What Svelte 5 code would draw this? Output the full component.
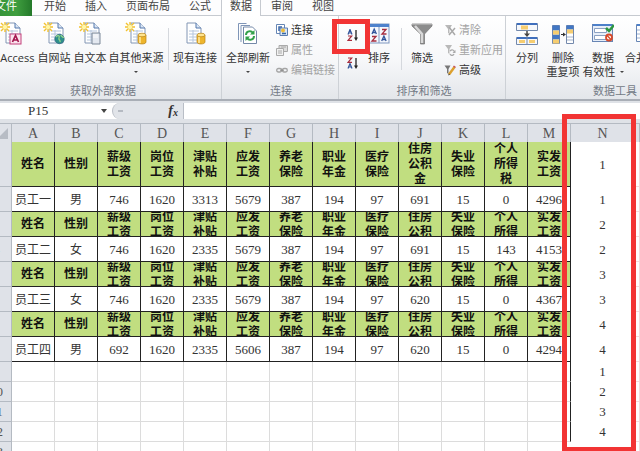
<script>
  const tabs = ['开始', '插入', '页面布局', '公式', '数据', '审阅', '视图'];
  const columns = ['A', 'B', 'C', 'D', 'E', 'F', 'G', 'H', 'I', 'J', 'K', 'L', 'M'];
  const fields = ['姓名', '性别', '薪级工资', '岗位工资', '津贴补贴', '应发工资', '养老保险', '职业年金', '医疗保险', '住房公积金', '失业保险', '个人所得税', '实发工资'];
  const staff = [
    ['员工一', '男', 746, 1620, 3313, 5679, 387, 194, 97, 691, 15, 0, 4296],
    ['员工二', '女', 746, 1620, 2335, 5679, 387, 194, 97, 691, 15, 143, 4153],
    ['员工三', '女', 746, 1620, 2335, 5679, 387, 194, 97, 620, 15, 0, 4367],
    ['员工四', '男', 692, 1620, 2335, 5606, 387, 194, 97, 620, 15, 0, 4294]
  ];
  const blank = columns.map(() => '');
  const rows = [
    ...staff.flatMap((person, i) => [
      { kind: i === 0 ? 'head first' : 'head', cells: fields, order: i + 1 },
      { kind: 'data', cells: person, order: i + 1 }
    ]),
    ...[1, 2, 3, 4, ''].map((order) => ({ kind: 'blank', cells: blank, order }))
  ];
  let activeTab = $state('数据');
  let cellName = $state('P15');
  let formula = $state('');
</script>

{#snippet sheetPage()}
  <path d="M6 1h9l5 5v15H6z" fill="#fff" stroke="#8296b4" />
  <path d="M15 1v5h5" fill="#dbe6f4" stroke="#5579ad" />
  <path d="M8 9h10M8 12h10M8 15h10M8 18h10M12 8v12" stroke="#b5c6dd" />
{/snippet}

{#snippet spark()}
  <path d="M5 0v10M0 5h10M1 1l8 8M9 1l-8 8" stroke="#f2c230" stroke-width="1.4" />
  <circle cx="5" cy="5" r="2.2" fill="#fff6a8" />
{/snippet}

{#snippet cylinder()}
  <path d="M13 13v7c0 2.6 8 2.6 8 0v-7z" fill="#eeb52c" stroke="#b98212" stroke-width=".7" />
  <path d="M15 14v7" stroke="#ffe79a" stroke-width="1.6" />
  <ellipse cx="17" cy="13" rx="4" ry="1.8" fill="#ffe48e" stroke="#b98212" stroke-width=".7" />
{/snippet}

{#snippet icon(name)}
  <svg class="icon" viewBox="0 0 22 23" fill="none" aria-hidden="true">
    {#if name === 'access'}
      {@render sheetPage()}{@render spark()}
      <rect x="10" y="12" width="11" height="10" fill="#fbe4ee" stroke="#c2407a" />
      <path d="M12.500 20l3-6.500 3 6.500M13.500 18h4" stroke="#a3164f" stroke-width="1.7" />
    {:else if name === 'web'}
      {@render sheetPage()}{@render spark()}
      <circle cx="16.500" cy="17" r="4.700" fill="#2e8f8a" stroke="#2d6680" stroke-width=".7" />
      <path d="M13 15c2-3 4-1 3 1s2 2 1 4M18 13c0 2 2 1 2.500 3" stroke="#8ed28c" stroke-width="1.400" />
    {:else if name === 'text'}
      {@render sheetPage()}{@render spark()}
      <path d="M13 11h8v11h-8z" fill="#e3e8f0" stroke="#7b8797" />
      <path d="M14 13h5M14 15h5" stroke="#fff" />
    {:else if name === 'source'}
      {@render sheetPage()}{@render spark()}{@render cylinder()}
    {:else if name === 'existing'}
      <g transform="translate(-3 0)">{@render sheetPage()}</g>{@render cylinder()}
    {:else if name === 'refresh'}
      <path d="M1.500 18V1.500h8M4 20V3.500h9" stroke="#7f95b7" />
      <path d="M6.500 5h9l4 4v12.500h-13z" fill="#fff" stroke="#7489a8" />
      <path d="M9 13c0-4 5-5 7-2M17 14c0 4-5 5-7 2" stroke="#32a14a" stroke-width="2" />
      <path d="M17.500 8v4.500H13zM8.500 19v-4.500H13z" fill="#32a14a" />
    {:else if name === 'sort'}
      <rect x="1" y="2" width="20" height="19" fill="#f5f8fd" stroke="#7e97bf" />
      <path d="M1 2h20v3H1z" fill="#4e82cc" />
      <path d="M11 5v16" stroke="#7e97bf" />
      <path d="M4 12l2.200-5 2.200 5M4.700 10.500h3M13.700 19l2.200-5 2.200 5M14.400 17.500h3" stroke="#31549a" stroke-width="1.300" />
      <path d="M4 14.500h4l-4 4.500h4.500M14 7.500h4l-4 4.500h4.500" stroke="#a72d3e" stroke-width="1.300" />
    {:else if name === 'filter'}
      <path d="M1 2h20v2l-7.500 8v10h-4V12L1 4z" fill="#8c8c8c" stroke="#737373" stroke-width=".7" />
      <path d="M4 4l7 8v9" stroke="#d9d9d9" stroke-width="2.500" />
      <path d="M1 2.500h20" stroke="#aaa" />
    {:else if name === 'columns'}
      <path d="M.5 1.500h21v7H.5z" fill="#f6f8fb" stroke="#7389ac" />
      <path d="M1 2h20" stroke="#3f6fbd" stroke-width="2" />
      <path d="M5 3.500h7v4H5z" fill="#f6cd70" />
      <path d="M11 9v4" stroke="#444" stroke-width="1.500" /><path d="M8 11.500h6L11 15z" fill="#444" />
      <path d="M.5 15.500h21v7H.5z" fill="#f6f8fb" stroke="#7389ac" />
      <path d="M1 16h20" stroke="#3f6fbd" stroke-width="2" />
      <path d="M3 18h6v3H3zM13 18h6v3h-6z" fill="#f6cd70" /><path d="M11 15v7" stroke="#7389ac" />
    {:else if name === 'dedupe'}
      <path d="M.5 3.500h7v18h-7zM14.500 3.500h7v18h-7z" fill="#fff" stroke="#7389ac" />
      <path d="M.5 3.500h7v5h-7zM.5 12.500h7v5h-7zM14.500 3.500h7v4h-7z" fill="#4277c4" />
      <path d="M1 8.500h6v4H1zM1 17.500h6v4H1zM15 7.500h6v4h-6z" fill="#f6cd70" />
      <path d="M15 15h6M15 18h6" stroke="#a4b3ca" /><path d="M9 12.500h4" stroke="#333" /><path d="M11 10.500l3 2-3 2z" fill="#333" />
    {:else if name === 'validate'}
      <rect x=".5" y="2.500" width="20" height="17" fill="#e7eef8" stroke="#6785b4" />
      <path d="M1 3h19" stroke="#4d80c9" stroke-width="2" />
      <path d="M2.500 6.500h12v4h-12zM2.500 13.500h12v4h-12z" fill="#fff" stroke="#8ba1c2" />
      <path d="M14 6l3 3 5-6" stroke="#2c9740" stroke-width="2.500" />
      <circle cx="17" cy="15.500" r="3" fill="#fff" stroke="#d84a2a" stroke-width="1.800" /><path d="M15 13.500l4 4" stroke="#d84a2a" stroke-width="1.500" />
    {:else if name === 'merge'}
      <path d="M.5 2.500h12v17H.5zM15.500 8.500h6v8h-6z" fill="#fff" stroke="#6785b4" />
      <path d="M1 3h11" stroke="#4d80c9" stroke-width="2" /><path d="M1 8h11M1 12h11M1 16h11M6 3v16" stroke="#9bb0d0" />
    {/if}
  </svg>
{/snippet}

{#snippet small(name)}
  <svg class="mini" viewBox="0 0 12 12" fill="none" aria-hidden="true">
    {#if name === 'link'}
      <path d="M.5 .5h8v9h-8z" fill="#fff" stroke="#6686b5" /><path d="M4 4h7.500v7.500H4z" fill="#d9e6f6" stroke="#5b7db0" />
      <path d="M3 7V3h3" stroke="#3c68a8" stroke-width="1.500" /><circle cx="7" cy="6.500" r="2" fill="#efbd3c" /><path d="M6 9.500h4" stroke="#3567a8" stroke-width="1.500" />
    {:else if name === 'props'}
      <path d="M3 1.500h8.500v6H3z" fill="#ddd" stroke="#aaa" /><path d="M.5 4.500h7v7h-7z" fill="#f1f1f1" stroke="#aaa" /><path d="M2 7h4M2 9h4M5 3h5" stroke="#aaa" />
    {:else if name === 'chain'}
      <rect x=".7" y="4.500" width="5" height="3.500" rx="1.700" stroke="#a5a5a5" stroke-width="1.300" /><rect x="6.300" y="4.500" width="5" height="3.500" rx="1.700" stroke="#a5a5a5" stroke-width="1.300" /><path d="M4 6.200h4" stroke="#888" />
    {:else if name === 'clear'}
      <path d="M1 1h7L5.500 5v5L4 9V5z" fill="#b9b9b9" /><path d="M5 3l6 8M11 4l-6 7" stroke="#a9a9a9" stroke-width="1.500" />
    {:else if name === 'reapply'}
      <path d="M1 1h7L5.500 5v5L4 9V5z" fill="#b9b9b9" /><path d="M6 7c2-2 4-1 4.500 1M10 10c-1 2-3 2-4 0" stroke="#a9a9a9" stroke-width="1.300" /><path d="M11.500 6v3H8.500z" fill="#a9a9a9" />
    {:else if name === 'advanced'}
      <path d="M.5 1.500h6L4.500 5v5L3 9V5z" fill="#777" /><path d="M5 10.500L10.500 3" stroke="#dca02e" stroke-width="2.500" /><path d="M9.500 2l2 1.500" stroke="#c45160" stroke-width="1.500" /><path d="M4 11.500l1-2 1 1z" fill="#333" />
    {:else if name === 'asc' || name === 'desc'}
      <path d={name === 'asc' ? 'M1 5.500l2-5 2 5M1.700 4h2.600' : 'M1 11.500l2-5 2 5M1.700 10h2.600'} stroke="#31549a" stroke-width="1.200" />
      <path d={name === 'asc' ? 'M1 7h3.700L1 11.400h4' : 'M1 1h3.700L1 5.400h4'} stroke="#a72d3e" stroke-width="1.200" />
      <path d="M9 1v9" stroke="#222" stroke-width="1.300" /><path d="M7 8.500h4L9 12z" fill="#222" />
    {/if}
  </svg>
{/snippet}

{#snippet big(name, label, second = '', arrow = false)}
  <button class="big {name}">
    {@render icon(name)}
    <span>{label}</span>
    {#if second || arrow}<span class="second">{second}{#if arrow}<i class="caret"></i>{/if}</span>{/if}
  </button>
{/snippet}

<main class="app">
  <nav class="tabs">
    <button class="file">文件</button>
    {#each tabs as tab}
      <button class:active={tab === activeTab} onclick={() => (activeTab = tab)}>{tab}</button>
    {/each}
  </nav>

  <div class="ribbon">
    <section class="group external">
      <div class="tools">
        {@render big('access', '自 Access')}
        {@render big('web', '自网站')}
        {@render big('text', '自文本')}
        {@render big('source', '自其他来源', '', true)}
        <div class="rule"></div>
        {@render big('existing', '现有连接')}
      </div>
      <h2>获取外部数据</h2>
    </section>
    <section class="group links">
      <div class="tools">
        {@render big('refresh', '全部刷新', '', true)}
        <div class="stack">
          <button>{@render small('link')}连接</button>
          <button disabled>{@render small('props')}属性</button>
          <button disabled>{@render small('chain')}编辑链接</button>
        </div>
      </div>
      <h2>连接</h2>
    </section>
    <section class="group sorting">
      <div class="tools">
        <div class="orders">
          <button aria-label="升序">{@render small('asc')}<span class="mark"></span></button>
          <button aria-label="降序">{@render small('desc')}</button>
        </div>
        {@render big('sort', '排序')}
        <div class="rule"></div>
        {@render big('filter', '筛选')}
        <div class="stack">
          <button disabled>{@render small('clear')}清除</button>
          <button disabled>{@render small('reapply')}重新应用</button>
          <button>{@render small('advanced')}高级</button>
        </div>
      </div>
      <h2>排序和筛选</h2>
    </section>
    <section class="group data-tools">
      <div class="tools">
        {@render big('columns', '分列')}
        {@render big('dedupe', '删除', '重复项')}
        {@render big('validate', '数据', '有效性', true)}
        {@render big('merge', '合并计算')}
      </div>
      <h2>数据工具</h2>
    </section>
  </div>

  <div class="formula-bar">
    <input class="name" aria-label="名称框" bind:value={cellName} />
    <button class="drop" aria-label="选择名称"><i class="caret"></i></button>
    <div class="holder">
      <div class="pill"><span class="grip"></span><button class="fx" aria-label="插入函数">f<sub>x</sub></button></div>
    </div>
    <input class="formula" aria-label="编辑栏" bind:value={formula} />
  </div>

  <div class="sheet">
    <table>
      <colgroup>
        <col class="c-index" />
        {#each columns as c}<col class="c-field" />{/each}
        <col class="c-order" />
        <col />
      </colgroup>
      <thead>
        <tr>
          <th class="corner"><i></i></th>
          {#each columns as c}<th>{c}</th>{/each}
          <th>N</th>
          <th></th>
        </tr>
      </thead>
      <tbody>
        {#each rows as row, r}
          <tr class={row.kind}>
            <th scope="row">{r + 1}</th>
            {#each row.cells as cell}<td><div><span>{cell}</span></div></td>{/each}
            <td class="order">{row.order}</td>
            <td class="rest"></td>
          </tr>
        {/each}
      </tbody>
    </table>
    <div class="frame"></div>
  </div>
</main>

<style>
  :global(body) { margin: 0; }
  .app {
    height: 100vh;
    overflow: hidden;
    background: #fff;
    color: #333;
    font: 11px/14px "Open Sans", "Noto Sans CJK SC", sans-serif;
  }
  button {
    margin: 0;
    padding: 0;
    border: 0;
    background: none;
    font: inherit;
    color: inherit;
    white-space: nowrap;
  }
  .tabs {
    display: flex;
    gap: 1px;
    height: 21px;
    margin: -5px 0 0 -20px;
    background: #fdfdfe;
    box-shadow: inset 0 -1px #c6cad0;
  }
  .tabs button { padding: 0 9px; color: #444; }
  .tabs .file {
    width: 52px;
    margin-right: 2px;
    background: linear-gradient(90deg, #2d8a33, #3f9e3f 70%, #24792a);
    color: #fff;
  }
  .tabs .active {
    padding: 0 8px;
    border: solid #c6cad0;
    border-width: 0 1px;
    background: #fff;
  }
  .ribbon {
    display: flex;
    height: 83px;
    border-bottom: 2px solid #a9aeb6;
    background: linear-gradient(#fff, #f6f7f9 55%, #e3e6ea);
  }
  .group {
    display: flex;
    flex: none;
    flex-direction: column;
    box-sizing: border-box;
    border-right: 1px solid #cdd1d6;
  }
  .external { width: 240px; margin-left: -18px; padding-left: 3px; }
  .links { width: 117px; padding-left: 2px; }
  .sorting { width: 167px; padding-left: 4px; }
  .data-tools { width: 214px; padding-left: 5px; }
  .tools { display: flex; flex: 1; padding-top: 6px; }
  h2 {
    margin: 0;
    height: 15px;
    text-align: center;
    font-size: 11px;
    font-weight: 400;
    color: #737a85;
  }
  .big {
    display: flex;
    flex-direction: column;
    align-items: center;
    flex: none;
    width: 36px;
  }
  .big span { margin-top: 6px; }
  .big .second { display: flex; align-items: center; height: 14px; margin-top: 0; }
  .access { width: 51px; }
  .source { width: 56px; }
  .existing, .refresh, .merge { width: 48px; }
  .columns { width: 32px; }
  .dedupe, .validate { width: 40px; }
  .icon { width: 22px; height: 23px; flex: none; }
  .caret {
    border: 2px solid transparent;
    border-top-color: #444;
    border-bottom: 0;
  }
  .validate .caret { margin-left: 4px; }
  .rule { width: 1px; height: 42px; margin: 6px 2px 0 4px; background: #d5d8dd; }
  .stack { display: flex; flex-direction: column; gap: 5px; padding: 0 0 0 4px; }
  .stack button { display: flex; align-items: center; gap: 3px; height: 15px; }
  .stack button:disabled { color: #a3a3a3; }
  .mini { width: 12px; height: 12px; flex: none; }
  .orders { display: flex; flex-direction: column; gap: 16px; padding: 7px 2px 0 4px; }
  .orders button { position: relative; display: flex; height: 12px; }
  .mark {
    position: absolute;
    left: -15px;
    top: -10px;
    width: 28px;
    height: 25px;
    border: 5px solid #f23434;
  }
  .formula-bar {
    display: flex;
    align-items: stretch;
    height: 16px;
    padding: 2px 0 4px;
    background: #dfe2e7;
  }
  input {
    min-width: 0;
    padding: 0;
    border: 0;
    outline: 0;
    background: #fff;
    font: 13px "Liberation Serif", "Noto Sans CJK SC", serif;
    color: #333;
  }
  .name { width: 68px; padding-left: 28px; }
  .drop { display: flex; align-items: center; justify-content: center; width: 16px; background: #fff; }
  .drop .caret { border-width: 4px 3px 0; }
  .holder { display: flex; background: #fff; }
  .pill {
    display: flex;
    align-items: center;
    justify-content: space-between;
    box-sizing: border-box;
    width: 72px;
    padding: 0 5px;
    border: solid #b9bec6;
    border-width: 0 1px;
    border-radius: 8px 0 0 8px;
    background: #e1e4e9;
  }
  .grip { width: 5px; height: 2px; background: #b5bac2; }
  .fx { font: italic bold 14px/16px "Liberation Serif", serif; }
  .fx sub { font-size: 10px; line-height: 0; vertical-align: -1px; }
  .formula { flex: 1; }
  .sheet { position: relative; }
  table {
    width: calc(100% + 18px);
    margin-left: -18px;
    table-layout: fixed;
    border-collapse: separate;
    border-spacing: 0;
    font: 13px/15px "Liberation Serif", "Noto Sans CJK SC", serif;
  }
  .c-index { width: 30px; }
  .c-field { width: 43px; }
  .c-order { width: 64px; }
  th, td { box-sizing: border-box; padding: 0; text-align: center; vertical-align: middle; overflow: hidden; }
  th {
    border: solid #b4bac2;
    border-width: 0 1px 1px 0;
    background: #dfe2e8;
    color: #555;
    font-weight: 400;
  }
  thead th {
    height: 19px;
    border-top-width: 1px;
    border-bottom-width: 0;
    font-size: 14px;
    line-height: 17px;
  }
  .corner i { display: block; margin-left: 15px; border: solid transparent; border-width: 0 0 11px 11px; border-bottom-color: #b7bcc4; width: 0; }
  td { border: solid #dcdcdc; border-width: 0 1px 1px 0; color: #333; }
  td div { display: flex; flex-direction: column; justify-content: center; overflow: hidden; }
  .head td, .data td { border-color: #222; }
  .head td div {
    box-sizing: border-box;
    height: 24px;
    padding: 1px 8px 0;
    background: #c1de80;
    font-size: 12px;
    font-weight: 700;
    color: #111;
  }
  .head td span { flex: none; max-height: 30px; overflow: hidden; }
  .first td div { height: 44px; }
  .first td span { max-height: none; }
  .data td div { box-sizing: border-box; height: 24px; }
  .data td:nth-child(2), .data td:nth-child(3) { font-size: 12px; }
  .data td:nth-child(2) div, .data td:nth-child(3) div { padding-top: 2px; }
  .blank td { height: 20px; }
  td:nth-child(14) { border-right-color: #222; }
  .blank:last-child td:nth-child(14) { border-right-color: #fff; }
  tbody .order { border-color: transparent; background: #fff; }
  tbody .rest { border-color: #f3dcdc; }
  .frame {
    position: absolute;
    left: 562px;
    top: -9px;
    width: 64px;
    height: 328px;
    border: 5px solid #f23434;
    pointer-events: none;
  }
</style>
